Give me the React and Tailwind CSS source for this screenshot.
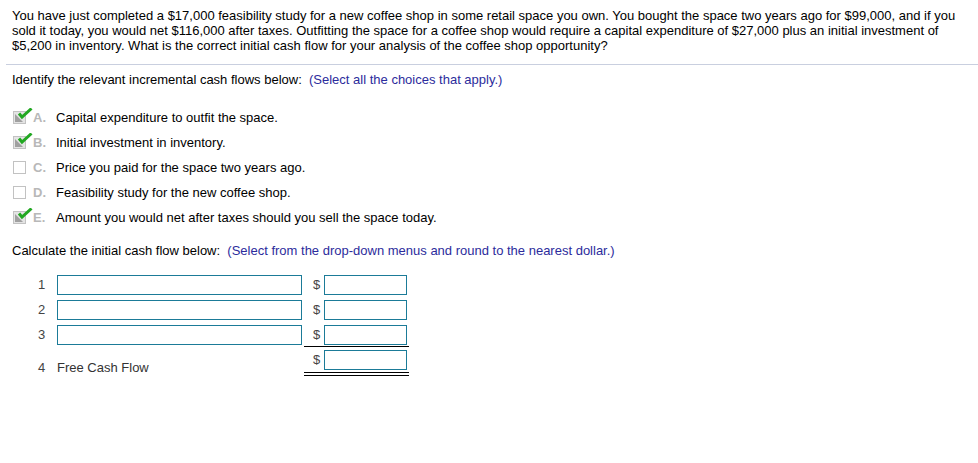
import React from 'react';

const options = [
  { letter: 'A.', text: 'Capital expenditure to outfit the space.', checked: true },
  { letter: 'B.', text: 'Initial investment in inventory.', checked: true },
  { letter: 'C.', text: 'Price you paid for the space two years ago.', checked: false },
  { letter: 'D.', text: 'Feasibility study for the new coffee shop.', checked: false },
  { letter: 'E.', text: 'Amount you would net after taxes should you sell the space today.', checked: true },
];

const CheckBox = ({ checked }) => (
  <svg width="21" height="20" viewBox="0 0 21 20" className="shrink-0">
    <rect x="1.5" y="3.5" width="12" height="12" fill={checked ? '#e4e4e4' : '#fff'} stroke="#c2c2c2" />
    {checked && (
      <>
        <polygon points="3,6 3,14 11,14" fill="#a0a0a0" />
        <polyline points="7,5.5 10,9 19.5,0.5" fill="none" stroke="#22a822" strokeWidth="3" />
      </>
    )}
  </svg>
);

const Box = ({ w }) => <div className={`${w} h-[20px] border border-[#1b7b98] bg-white`} />;

const App = () => {
  return (
    <div className="w-[978px] h-[463px] bg-white text-black text-[13px] font-['Liberation_Sans',Arial,sans-serif]">
      <div className="px-3 pt-[8px] leading-[15px]">
        <div>You have just completed a $17,000 feasibility study for a new coffee shop in some retail space you own. You bought the space two years ago for $99,000, and if you</div>
        <div>sold it today, you would net $116,000 after taxes. Outfitting the space for a coffee shop would require a capital expenditure of $27,000 plus an initial investment of</div>
        <div>$5,200 in inventory. What is the correct initial cash flow for your analysis of the coffee shop opportunity?</div>
      </div>

      <div className="ml-[6px] mt-[11px] border-t border-[#c9cfdf]" />

      <div className="px-3 mt-[7px] leading-[15px]">
        Identify the relevant incremental cash flows below:{'  '}
        <span className="text-[#2c2c9c]">&nbsp;(Select all the choices that apply.)</span>
      </div>

      <div className="mt-[18px] pl-[12px]">
        {options.map((o) => (
          <div key={o.letter} className="flex items-center h-[25px]">
            <CheckBox checked={o.checked} />
            <span className="w-[23px] font-bold text-[#b8b8b8]">{o.letter}</span>
            <span>{o.text}</span>
          </div>
        ))}
      </div>

      <div className="px-3 mt-[13px] leading-[15px]">
        Calculate the initial cash flow below:{'  '}
        <span className="text-[#2c2c9c]">&nbsp;(Select from the drop-down menus and round to the nearest dollar.)</span>
      </div>

      <div className="mt-[17px] pl-[38px] flex flex-col">
        {[1, 2, 3].map((n) => (
          <div key={n} className={`flex items-start ${n > 1 ? 'mt-[5px]' : ''}`}>
            <span className="w-[19px] h-[20px] flex items-center text-[#444]">{n}</span>
            <Box w="w-[245px]" />
            <div className={`ml-[2px] w-[105px] flex items-center pl-[9px] ${n === 3 ? 'pb-[1px] border-b border-black' : ''}`}>
              <span className="w-[11px] text-[#444]">$</span>
              <Box w="w-[83px]" />
            </div>
          </div>
        ))}
        <div className="flex items-start mt-[3px]">
          <span className="w-[19px] mt-[8px] text-[#444]">4</span>
          <span className="w-[247px] mt-[8px] text-[#333]">Free Cash Flow</span>
          <div className="w-[105px]">
            <div className="flex items-center pl-[9px]">
              <span className="w-[11px] text-[#444]">$</span>
              <Box w="w-[83px]" />
            </div>
            <div className="mt-[2px] h-px bg-black" />
            <div className="mt-[2px] h-px bg-black" />
          </div>
        </div>
      </div>
    </div>
  );
};

export default App;
